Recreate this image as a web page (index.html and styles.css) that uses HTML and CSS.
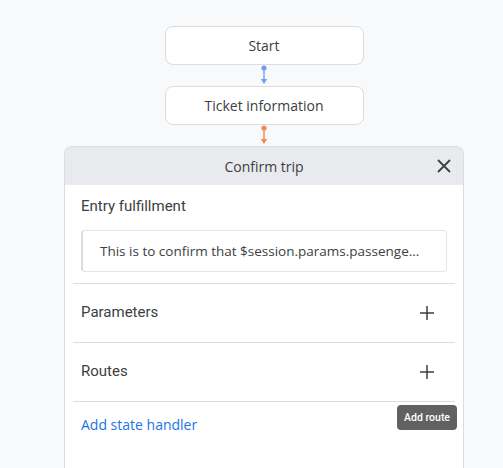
FILE: index.html
```html
<!DOCTYPE html>
<html>
<head>
<meta charset="utf-8">
<link rel="stylesheet" href="styles.css">
</head>
<body>
<div class="canvas">
  <div class="flow">
    <div class="node">Start</div>
    <div class="conn blue">
      <svg width="10" height="20" viewBox="0 0 10 20"><circle cx="5" cy="3" r="2.6" fill="#6ea0ee"/><line x1="5" y1="3" x2="5" y2="16" stroke="#6ea0ee" stroke-width="1.4"/><path d="M1.8 14 L5 19 L8.2 14 Z" fill="#6ea0ee"/></svg>
    </div>
    <div class="node">Ticket information</div>
    <div class="conn orange">
      <svg width="10" height="20" viewBox="0 0 10 20"><circle cx="5" cy="3" r="2.6" fill="#ee8c48"/><line x1="5" y1="3" x2="5" y2="16" stroke="#ee8c48" stroke-width="1.4"/><path d="M1.8 14 L5 19 L8.2 14 Z" fill="#ee8c48"/></svg>
    </div>
  </div>
  <div class="panel">
    <div class="panel-head">
      <span class="title">Confirm trip</span>
      <svg class="close" width="16" height="16" viewBox="0 0 16 16"><path d="M2 2 L14 14 M14 2 L2 14" stroke="#3c4043" stroke-width="1.8"/></svg>
    </div>
    <div class="panel-body">
      <div class="section entry">
        <div class="label">Entry fulfillment</div>
        <div class="textbox">This is to confirm that $session.params.passenge...</div>
      </div>
      <div class="row">
        <span class="label">Parameters</span>
        <svg class="plus" width="16" height="16" viewBox="0 0 16 16"><path d="M8 1 V15 M1 8 H15" stroke="#3c4043" stroke-width="1.5"/></svg>
      </div>
      <div class="row">
        <span class="label">Routes</span>
        <svg class="plus" width="16" height="16" viewBox="0 0 16 16"><path d="M8 1 V15 M1 8 H15" stroke="#3c4043" stroke-width="1.5"/></svg>
      </div>
      <div class="footer">
        <span class="link">Add state handler</span>
        <div class="tooltip">Add route</div>
      </div>
    </div>
  </div>
</div>
</body>
</html>
```
FILE: styles.css
```css
html, body {
  margin: 0;
  padding: 0;
  background: #f8f9fa;
  font-family: "Roboto", "Liberation Sans", sans-serif;
  color: #3c4043;
}
.canvas {
  width: 503px;
  height: 468px;
  overflow: hidden;
  position: relative;
}
.flow {
  display: flex;
  flex-direction: column;
  align-items: center;
  padding-top: 26px;
  margin-left: 64px;
  width: 400px;
}
.node {
  width: 197px;
  height: 37px;
  background: #fff;
  border: 1px solid #dadce0;
  border-radius: 8px;
  display: flex;
  align-items: center;
  justify-content: center;
  font-family: "Open Sans", "Roboto", sans-serif;
  font-size: 14px;
  color: #3c4043;
}
.conn {
  height: 21px;
  display: flex;
  justify-content: center;
  align-items: flex-start;
}
.conn svg { display: block; }
.panel {
  margin-left: 64px;
  width: 398px;
  border-radius: 8px 8px 0 0;
  overflow: hidden;
  border: 1px solid #dadce0;
  border-bottom: none;
  background: #fff;
}
.panel-head {
  height: 38px;
  background: #e8eaed;
  display: flex;
  align-items: center;
  justify-content: center;
  position: relative;
  font-family: "Open Sans", "Roboto", sans-serif;
  font-size: 14px;
}
.panel-head .title { color: #3c4043; }
.close {
  position: absolute;
  right: 11px;
  top: 11px;
}
.panel-body {
  padding: 0 8px 60px 8px;
}
.label {
  font-size: 15px;
  color: #3c4043;
}
.entry {
  padding: 12px 8px 11px 8px;
  border-bottom: 1px solid #dadce0;
}
.entry .label { margin-bottom: 15px; }
.textbox {
  height: 40px;
  border: 1px solid #e3e5e8;
  border-left: 2px solid #dadce0;
  border-radius: 4px;
  display: flex;
  align-items: center;
  padding-left: 17px;
  font-family: "Open Sans", "Roboto", sans-serif;
  font-size: 13.5px;
  color: #3c4043;
}
.row {
  height: 58px;
  display: flex;
  align-items: center;
  justify-content: space-between;
  padding: 0 20px 0 8px;
  border-bottom: 1px solid #dadce0;
}
.row .label { margin-top: -3px; }
.footer {
  position: relative;
  padding: 13px 8px;
}
.link {
  color: #1a73e8;
  font-family: "Open Sans", "Roboto", sans-serif;
  font-size: 14px;
  font-weight: 500;
}
.tooltip {
  position: absolute;
  right: -2px;
  top: 3px;
  background: #616161;
  color: #fff;
  font-family: "Roboto", sans-serif;
  font-size: 10.5px;
  font-weight: 500;
  padding: 6px 7px;
  border-radius: 4px;
}
```
